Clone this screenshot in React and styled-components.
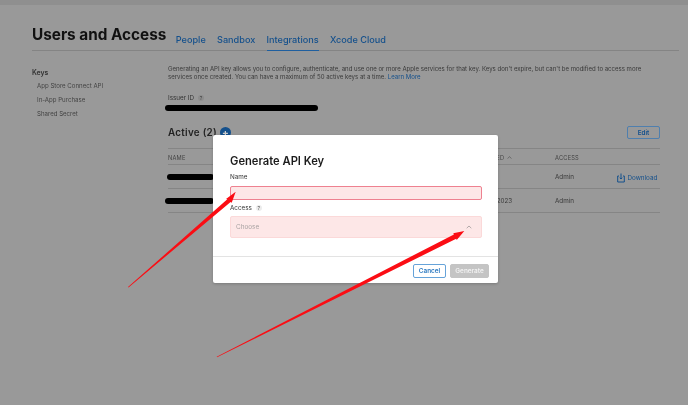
import React from "react";
import styled, { createGlobalStyle } from "styled-components";

const Global = createGlobalStyle`
  html, body { margin: 0; padding: 0; background: #999; }
  body { font-family: Inter, "Liberation Sans", sans-serif; -webkit-font-smoothing: antialiased; }
`;
const Page = styled.div`
  position: relative; width: 688px; height: 405px; overflow: hidden; background: #999999; filter: blur(0.35px);
`;
const TopStrip = styled.div`height: 5px; background: #8f8f8f;`;
const Main = styled.main`padding: 0 9px 0 32px;`;
const Header = styled.header`
  display: flex; align-items: flex-end; height: 44.5px; border-bottom: 1px solid #848484;
`;
const Title = styled.h1`
  margin: 0 9.5px 0 0; padding-bottom: 3px; font-size: 15.3px; line-height: 24px; font-weight: 700; color: #111; white-space: nowrap;
`;
const Tabs = styled.nav`display: flex; gap: 11.3px;`;
const Tab = styled.span`
  display: block; height: 20px; font-size: 9.15px; line-height: 19px; font-weight: 500; color: #14508c; white-space: nowrap;
  border-bottom: ${p => (p.$active ? "1px solid #1f5f9f" : "1px solid transparent")};
  margin-bottom: -1px;
`;
const Columns = styled.div`display: flex; padding-top: 14px;`;
const Side = styled.aside`width: 136px; flex: none;`;
const SideHead = styled.div`font-size: 6.9px; line-height: 9px; font-weight: 600; color: #333; margin: 3px 0 2px;`;
const SideItem = styled.div`font-size: 6.1px; line-height: 14.3px; color: #444; padding-left: 5px;`;
const Content = styled.section`width: 492px; flex: none;`;
const Intro = styled.p`margin: 0; width: 490px; font-size: 6.05px; line-height: 8.7px; color: #3a3a3a;`;
const LearnMore = styled.span`color: #14508c;`;
const Issuer = styled.div`display: flex; align-items: center; gap: 4px; margin-top: 12px; font-size: 6.3px; line-height: 9px; color: #333;`;
const Help = styled.span`
  display: inline-flex; align-items: center; justify-content: center; width: 6px; height: 6px; border-radius: 50%;
  background: #8d8d8d; color: #444; font-size: 5px; line-height: 6px;
`;
const Redact = styled.div`
  height: ${p => p.$h}px; width: ${p => p.$w}px; margin-left: ${p => p.$x}px; background: #000; border-radius: 4px; flex: none;
`;
const IssuerBar = styled(Redact)`margin-top: 2px;`;
const ActiveRow = styled.div`display: flex; align-items: center; justify-content: space-between; margin-top: 16px; height: 12px;`;
const ActiveTitle = styled.div`display: flex; align-items: center; gap: 3px; font-size: 9.8px; font-weight: 600; color: #222; letter-spacing: 0.3px;`;
const Plus = styled.span`
  display: inline-flex; align-items: center; justify-content: center; width: 11px; height: 11px; border-radius: 50%;
  background: #14508c; color: #ccc; font-size: 10px; line-height: 11px; font-weight: 700;
`;
const EditBtn = styled.span`
  display: flex; align-items: center; justify-content: center; width: 31px; height: 11px; border: 1px solid #4f7fae; border-radius: 2px;
  font-size: 6.3px; font-weight: 600; color: #14508c;
`;
const Table = styled.div`width: 492px; margin-top: 9px; border-top: 1px solid #858585;`;
const Row = styled.div`
  display: grid; grid-template-columns: 309px 78px 62px 43px; align-items: center; box-sizing: border-box; height: ${p => p.$h}px;
  padding-top: 1.5px; border-bottom: 1px solid #858585; font-size: 6.3px; color: #3a3a3a;
`;
const HeadCell = styled.span`display: flex; align-items: center; gap: 3px; font-size: 5.7px; letter-spacing: 0.2px; color: #444;`;
const Download = styled.span`display: flex; align-items: center; gap: 2.5px; color: #14508c; font-size: 6.3px; padding-top: 1px;`;
const NameBar = styled.div`display: flex; align-items: center;`;

const Modal = styled.div`
  position: absolute; left: 213px; top: 135px; width: 285px; height: 148px; background: #fff; border-radius: 2px;
  box-shadow: 0 1px 3px rgba(0,0,0,.2); display: flex; flex-direction: column; box-sizing: border-box;
`;
const ModalBody = styled.div`padding: 19px 16.5px 0 17px; height: 122px; box-sizing: border-box; border-bottom: 1px solid #e3e3e3; flex: none;`;
const ModalTitle = styled.h2`margin: 0; font-size: 11.2px; line-height: 15px; font-weight: 600; color: #1c1c1c;`;
const Label = styled.div`display: flex; align-items: center; gap: 4px; font-size: 6.3px; line-height: 8px; color: #333; margin: ${p => p.$m};`;
const HelpLight = styled(Help)`background: #ececec; color: #555;`;
const NameInput = styled.div`height: 14px; box-sizing: border-box; border: 1px solid #ee8190; border-radius: 2px; background: #fde7e7; margin-top: 5px;`;
const Select = styled.div`
  height: 22px; box-sizing: border-box; border: 1px solid #fbd9d9; border-radius: 2px; background: #fde7e7; margin-top: 4px;
  display: flex; align-items: center; justify-content: space-between; padding: 0 9px 0 5px; font-size: 6.4px; color: #a9a3a3;
`;
const Footer = styled.div`display: flex; justify-content: flex-end; gap: 4px; padding: 7px 9px 0 0;`;
const Btn = styled.span`
  display: flex; align-items: center; justify-content: center; height: 12px; width: ${p => p.$w}px; border-radius: 2px; font-size: 6.4px; font-weight: 600;
  border: 1px solid ${p => (p.$primary ? "#c4c4c4" : "#66a3d9")}; background: ${p => (p.$primary ? "#c4c4c4" : "#fff")};
  color: ${p => (p.$primary ? "#f2f2f2" : "#2c79c0")};
`;
const Arrows = styled.svg`position: absolute; left: 0; top: 0; pointer-events: none;`;

export default function App() {
  return (
    <>
      <Global />
      <Page>
        <TopStrip />
        <Main>
          <Header>
            <Title>Users and Access</Title>
            <Tabs>
              <Tab>People</Tab>
              <Tab>Sandbox</Tab>
              <Tab $active>Integrations</Tab>
              <Tab>Xcode Cloud</Tab>
            </Tabs>
          </Header>
          <Columns>
            <Side>
              <SideHead>Keys</SideHead>
              <SideItem>App Store Connect API</SideItem>
              <SideItem>In-App Purchase</SideItem>
              <SideItem>Shared Secret</SideItem>
            </Side>
            <Content>
              <Intro>
                Generating an API key allows you to configure, authenticate, and use one or more Apple services for that key. Keys don't expire, but can't be modified to access more services once created. You can have a maximum of 50 active keys at a time. <LearnMore>Learn More</LearnMore>
              </Intro>
              <Issuer>Issuer ID <Help>?</Help></Issuer>
              <IssuerBar $w={153} $h={6} $x={-3} />
              <ActiveRow>
                <ActiveTitle>Active (2) <Plus>+</Plus></ActiveTitle>
                <EditBtn>Edit</EditBtn>
              </ActiveRow>
              <Table>
                <Row $h={16}>
                  <HeadCell>NAME</HeadCell>
                  <HeadCell>
                    CREATED
                    <svg width="5" height="3" viewBox="0 0 5 3" fill="none" stroke="#555" strokeWidth="0.7"><path d="M.5 2.6 2.5.7l2 1.9" /></svg>
                  </HeadCell>
                  <HeadCell>ACCESS</HeadCell>
                  <span />
                </Row>
                <Row $h={24}>
                  <NameBar><Redact $w={47} $h={6} $x={-1} /></NameBar>
                  <span />
                  <span>Admin</span>
                  <Download>
                    <svg width="8" height="10" viewBox="0 0 8 10" fill="none" stroke="#14508c" strokeWidth="1">
                      <path d="M2 3H.7v6h6.6V3H6M4 .5V6M2.7 4.8 4 6l1.3-1.2" />
                    </svg>
                    Download
                  </Download>
                </Row>
                <Row $h={24}>
                  <NameBar><Redact $w={49} $h={6} $x={-3} /></NameBar>
                  <span>Oct 2, 2023</span>
                  <span>Admin</span>
                  <span />
                </Row>
              </Table>
            </Content>
          </Columns>
        </Main>

        <Modal>
          <ModalBody>
            <ModalTitle>Generate API Key</ModalTitle>
            <Label $m="4px 0 0">Name</Label>
            <NameInput />
            <Label $m="4px 0 0">Access <HelpLight>?</HelpLight></Label>
            <Select>
              Choose
              <svg width="6" height="4" viewBox="0 0 6 4" fill="none" stroke="#a9a3a3" strokeWidth="0.9"><path d="M.7 3.2 3 1l2.3 2.2" /></svg>
            </Select>
          </ModalBody>
          <Footer>
            <Btn $w={31}>Cancel</Btn>
            <Btn $w={37} $primary>Generate</Btn>
          </Footer>
        </Modal>

        <Arrows width="688" height="405" viewBox="0 0 688 405">
          <polygon points="128,287 227.3,199.3 226,199 235.7,191.7 231.7,202.7 230.6,202 128.5,287.5" fill="#fb0d14" />
          <polygon points="216.7,356.7 453.9,234.4 453.3,233.3 464.3,231 456.7,240 456.2,238.8 217,357.2" fill="#fb0d14" />
        </Arrows>
      </Page>
    </>
  );
}
